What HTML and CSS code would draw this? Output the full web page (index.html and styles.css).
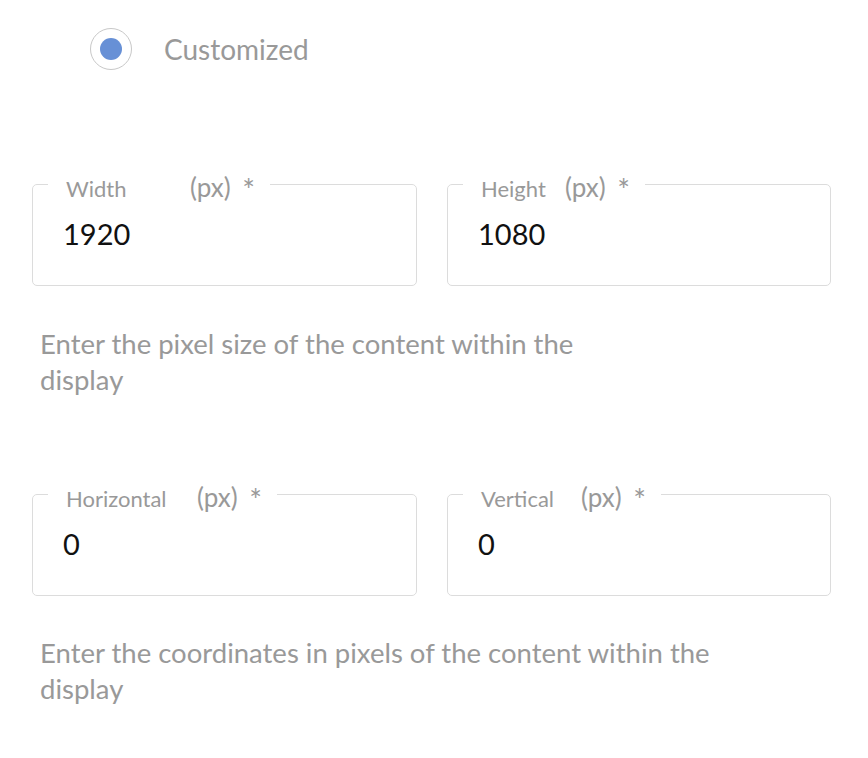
FILE: index.html
```html
<!DOCTYPE html>
<html>
<head>
<meta charset="utf-8">
<link rel="stylesheet" href="styles.css">
</head>
<body>
<div class="page">
  <label class="radio-row">
    <span class="radio"><span class="radio-dot"></span></span>
    <span class="radio-label">Customized</span>
  </label>

  <div class="fields fields-size">
    <fieldset class="field">
      <legend class="legend"><span class="name name-width">Width</span><span class="unit">(px) <span class="req">*</span></span></legend>
      <div class="value">1920</div>
    </fieldset>
    <fieldset class="field">
      <legend class="legend"><span class="name name-height">Height</span><span class="unit">(px) <span class="req">*</span></span></legend>
      <div class="value">1080</div>
    </fieldset>
  </div>
  <p class="help help-size">Enter the pixel size of the content within the display</p>

  <div class="fields fields-pos">
    <fieldset class="field">
      <legend class="legend"><span class="name name-horizontal">Horizontal</span><span class="unit">(px) <span class="req">*</span></span></legend>
      <div class="value">0</div>
    </fieldset>
    <fieldset class="field">
      <legend class="legend"><span class="name name-vertical">Vertical</span><span class="unit">(px) <span class="req">*</span></span></legend>
      <div class="value">0</div>
    </fieldset>
  </div>
  <p class="help help-pos">Enter the coordinates in pixels of the content within the display</p>
</div>
</body>
</html>
```

FILE: styles.css
```css
html, body {
  margin: 0;
  padding: 0;
  background: #ffffff;
}

.page {
  padding: 28px 37px 0 32px;
  font-family: "Lato", "Open Sans", sans-serif;
  color: #999999;
}

.radio-row {
  display: flex;
  align-items: center;
  margin-left: 58px;
  height: 42px;
}

.radio {
  box-sizing: border-box;
  width: 42px;
  height: 42px;
  border: 1px solid #c8c8c8;
  border-radius: 50%;
  display: flex;
  align-items: center;
  justify-content: center;
}

.radio-dot {
  width: 22px;
  height: 22px;
  border-radius: 50%;
  background: #6790d6;
}

.radio-label {
  margin-left: 32px;
  font-size: 28px;
  color: #999999;
}

.fields {
  display: grid;
  grid-template-columns: 385px 384px;
  column-gap: 30px;
}

.fields-size {
  margin-top: 97px;
}

.fields-pos {
  margin-top: 79px;
}

.field {
  margin: 0;
  padding: 0 30px 33px 30px;
  border: 1px solid #dcdcdc;
  border-radius: 5px;
  min-width: 0;
}

.legend {
  display: flex;
  align-items: baseline;
  margin-left: -15px;
  padding: 8px 15px 0 18px;
  color: #999999;
}

.name {
  font-size: 22px;
  line-height: 24px;
}

.unit {
  font-size: 26px;
  line-height: 24px;
  word-spacing: 5px;
}

.req {
  font-size: 30px;
  vertical-align: -4px;
}

.name-width { width: 124px; }
.name-height { width: 84px; }
.name-horizontal { width: 131px; }
.name-vertical { width: 100px; }

.value {
  margin-top: 15px;
  font-size: 29px;
  line-height: 36px;
  color: #111111;
}

.help {
  margin: 40px 0 0 8px;
  font-size: 27.5px;
  line-height: 36px;
  color: #999999;
}

.help-size {
  max-width: 620px;
}

.help-pos {
  margin-top: 39px;
  max-width: 720px;
}
```
